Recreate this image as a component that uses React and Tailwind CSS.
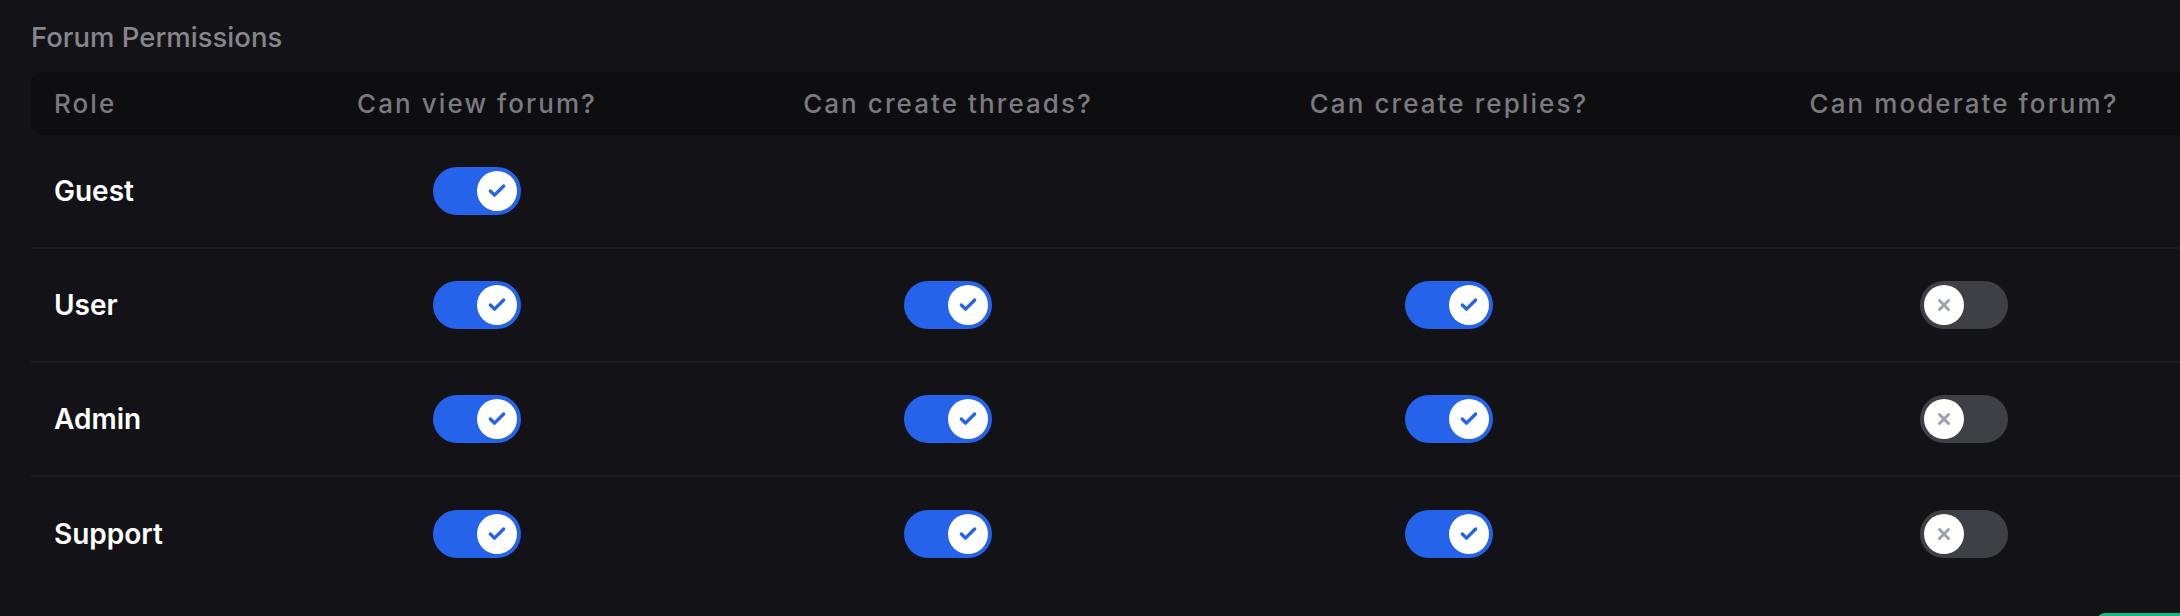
import React from "react";
import { Check, X } from "lucide-react";

const COLUMNS = ["Can view forum?", "Can create threads?", "Can create replies?", "Can moderate forum?"];

const ROLES = [
  { name: "Guest", perms: [true, null, null, null] },
  { name: "User", perms: [true, true, true, false] },
  { name: "Admin", perms: [true, true, true, false] },
  { name: "Support", perms: [true, true, true, false] },
];

const GRID = "grid grid-cols-[209px_474px_468px_534px_496px] items-center";

const Toggle = ({ on }) => (
  <div
    className={`w-[88px] h-[48px] rounded-full flex items-center px-[4px] ${
      on ? "bg-[#2563eb] justify-end" : "bg-[#3f3f46] justify-start"
    }`}
  >
    <div className="w-[40px] h-[40px] rounded-full bg-white flex items-center justify-center">
      {on ? (
        <Check size={20} strokeWidth={4} className="text-[#2563eb]" />
      ) : (
        <X size={18} strokeWidth={4} className="text-[#9ca3af]" />
      )}
    </div>
  </div>
);

export default function App() {
  return (
    <div
      className="w-[2180px] h-[616px] overflow-hidden bg-[#131317] pl-[31px] pt-[19px]"
      style={{ fontFamily: "Inter, 'Noto Sans', sans-serif" }}
    >
      <h2 className="text-[27.5px] leading-[36px] font-medium text-[#86868c]">Forum Permissions</h2>

      <div className="mt-[17px] w-[2181px]">
        {/* header */}
        <div className={`${GRID} h-[63px] bg-[#0e0e11] rounded-l-xl`}>
          <div className="pl-[23px] text-[26px] font-medium tracking-[0.08em] text-[#7a7a80]">Role</div>
          {COLUMNS.map((c) => (
            <div key={c} className="text-center text-[26px] font-medium tracking-[0.08em] text-[#7a7a80]">
              {c}
            </div>
          ))}
        </div>

        {/* rows */}
        {ROLES.map((r, i) => (
          <div
            key={r.name}
            className={`${GRID} h-[114px] ${i < ROLES.length - 1 ? "border-b-2 border-[#1c1c21]" : ""}`}
          >
            <div className="pl-[23px] text-[28px] font-semibold text-white">{r.name}</div>
            {r.perms.map((p, j) => (
              <div key={j} className="flex justify-center">
                {p !== null && <Toggle on={p} />}
              </div>
            ))}
          </div>
        ))}

        <div className="mt-[22px] flex pl-[2066px]">
          <button className="w-[140px] h-[48px] rounded-lg bg-[#17b884]" />
        </div>
      </div>
    </div>
  );
}
